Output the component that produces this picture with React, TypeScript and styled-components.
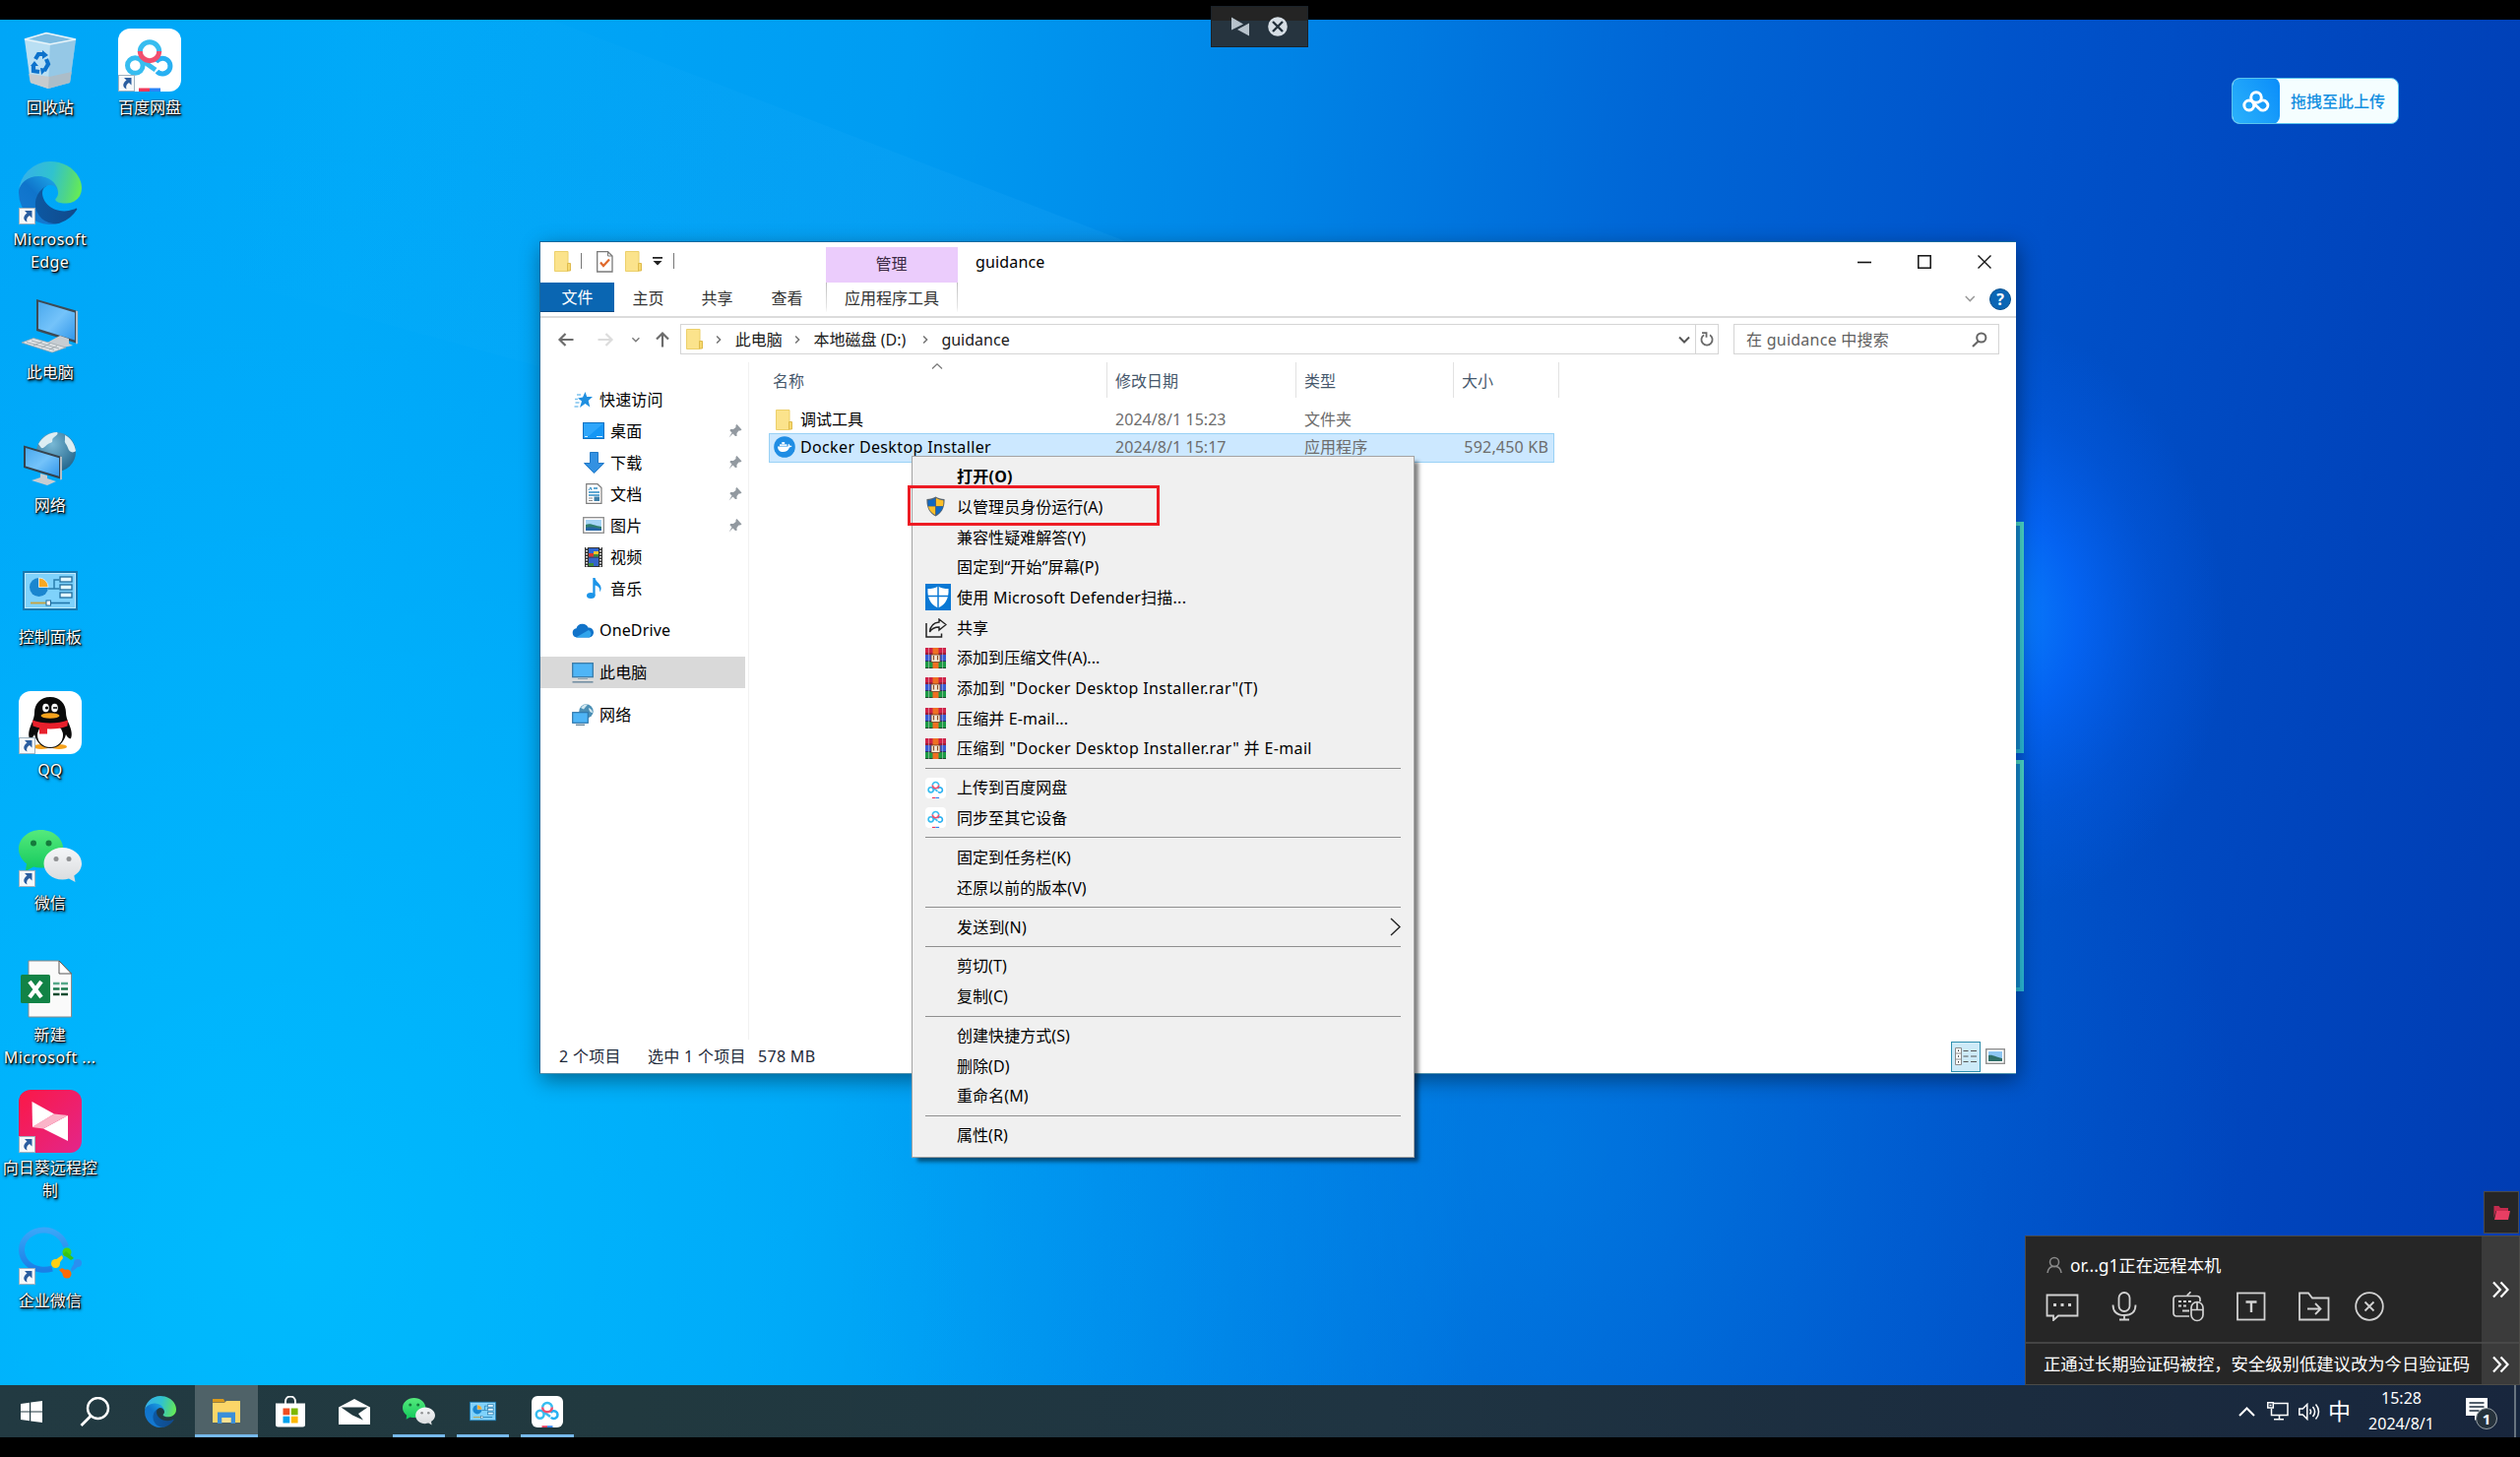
import React from "react";
import styled, { createGlobalStyle, css } from "styled-components";

const Global = createGlobalStyle`
  * { box-sizing: border-box; }
  html, body { margin: 0; padding: 0; background: #000; }
  body {
    font-family: "Noto Sans", "Noto Sans CJK SC", sans-serif;
    font-size: 16px;
    line-height: 22px;
    color: #000;
    overflow: hidden;
  }
  svg { display: block; flex: none; }
`;

/* ---------- shell ---------- */

const Screen = styled.div`
  position: relative;
  width: 2560px;
  height: 1480px;
  padding: 20px 0;
  background: #000;
  display: flex;
  flex-direction: column;
  overflow: hidden;
`;

const Desktop = styled.main`
  position: relative;
  flex: 1;
  overflow: hidden;
  background: linear-gradient(97deg, #00a6f7 0%, #00a9f8 14%, #009cf2 34%, #0084e6 48%, #0066d6 62%, #0052ca 76%, #0044bc 90%, #003cb2 100%);
`;

const Wallpaper = styled.svg`
  position: absolute;
  left: 0;
  top: 0;
`;

/* ---------- desktop icons ---------- */

const IconGrid = styled.div`
  position: absolute;
  left: 0;
  top: 9px;
  height: 1360px;
  display: grid;
  grid-auto-flow: column;
  grid-template-rows: repeat(10, 134.7px);
  grid-auto-columns: 101.3px;
`;

const IconCell = styled.div`
  display: flex;
  flex-direction: column;
  align-items: center;
  gap: 4.5px;
`;

const IconArt = styled.div`
  position: relative;
  width: 64px;
  height: 64px;
`;

const IconLabel = styled.div<{ $latin?: boolean }>`
  color: #fff;
  text-align: center;
  line-height: 23px;
  white-space: pre;
  letter-spacing: ${(p) => (p.$latin ? 0.45 : 0)}px;
  text-shadow: 1px 1px 1px #000, 1px 2px 3px rgba(0, 0, 0, 0.9), 0 0 2px rgba(0, 0, 0, 0.7);
`;

const ShortcutMark = styled.svg`
  position: absolute;
  left: 0;
  bottom: 0;
`;

/* ---------- explorer window ---------- */

const Explorer = styled.section`
  position: absolute;
  left: 548px;
  top: 225px;
  width: 1500px;
  height: 846px;
  display: flex;
  flex-direction: column;
  background: #fff;
  border: 1px solid #16699e;
  border-bottom-color: #4b90ad;
  border-right: 0;
  box-shadow: 2px 6px 20px rgba(0, 0, 0, 0.42);
`;

const TitleBar = styled.header`
  display: flex;
  height: 41px;
  padding-left: 14px;
`;

const QuickTools = styled.div`
  display: flex;
  align-items: center;
  width: 276px;
  padding-bottom: 2px;
`;

const ToolSep = styled.span<{ $ml: number; $mr: number }>`
  width: 1px;
  height: 16px;
  margin: 0 ${(p) => p.$mr}px 2px ${(p) => p.$ml}px;
  background: #777;
`;

const ToolSlot = styled.span<{ $ml?: number }>`
  margin-left: ${(p) => p.$ml ?? 0}px;
`;

const ManageTab = styled.div`
  width: 134px;
  margin-top: 5px;
  padding: 6px 1px 0 0;
  background: #ebccfc;
  text-align: center;
  color: #3b2a44;
`;

const WindowTitle = styled.div`
  flex: 1;
  padding: 9px 0 0 18px;
  letter-spacing: 0.15px;
`;

const WindowButtons = styled.div`
  display: flex;
  align-items: center;
  gap: 47px;
  padding: 0 25px 2px 0;
`;

const Ribbon = styled.nav`
  display: flex;
  height: 36px;
  border-bottom: 2px solid #dcdcdc;
`;

const RibbonTab = styled.div<{ $w: number; $kind?: "file" | "tool" }>`
  width: ${(p) => p.$w}px;
  height: 30px;
  padding-top: 5px;
  text-align: center;
  color: #333;
  ${(p) =>
    p.$kind === "file" &&
    css`
      background: #0a66b2;
      border-bottom: 1px solid #044a86;
      color: #fff;
      padding-top: 4px;
    `}
  ${(p) =>
    p.$kind === "tool" &&
    css`
      border: solid;
      border-width: 0 1px;
      border-image: linear-gradient(#bdbdbd, #e4e4e4 80%, #fff) 1;
    `}
`;

const RibbonEnd = styled.div`
  flex: 1;
  display: flex;
  justify-content: flex-end;
  align-items: center;
  gap: 13px;
  padding: 0 5px 1px 0;
`;

const HelpDot = styled.span`
  width: 22px;
  height: 22px;
  border-radius: 50%;
  background: #0b66b5;
  border: 1px solid #08518f;
  color: #fff;
  font-weight: 700;
  font-size: 16px;
  line-height: 20px;
  text-align: center;
`;

const AddressRow = styled.div`
  display: flex;
  align-items: center;
  height: 45px;
  padding: 0 17px 2px 17px;
`;

const NavButtons = styled.div`
  display: flex;
  align-items: center;
  width: 125px;
`;

const AddressBox = styled.div`
  display: flex;
  align-items: center;
  width: 1055px;
  height: 31px;
  border: 1px solid #d5d5d5;
  padding-left: 5px;
  color: #1a1a1a;
`;

const Crumb = styled.span<{ $w: number }>`
  width: ${(p) => p.$w}px;
  margin-left: 12px;
  white-space: nowrap;
`;

const AddressEnd = styled.div`
  display: flex;
  align-items: center;
  margin-left: auto;
  height: 100%;
`;

const RefreshCell = styled.div`
  display: flex;
  align-items: center;
  justify-content: center;
  width: 23px;
  height: 100%;
  margin-left: 4px;
  border-left: 1px solid #d5d5d5;
`;

const SearchBox = styled.div`
  display: flex;
  align-items: center;
  justify-content: space-between;
  width: 270px;
  height: 31px;
  margin-left: 15px;
  padding: 0 11px 0 12px;
  border: 1px solid #d5d5d5;
  color: #5f5f5f;
  letter-spacing: 0.25px;
`;

const Body = styled.div`
  flex: 1;
  display: flex;
`;

const SideTree = styled.aside`
  width: 212px;
  padding: 21.5px 3px 0 0;
  border-right: 1px solid #f1f1f1;
`;

const TreeItem = styled.div<{ $depth?: number; $gap?: boolean; $active?: boolean }>`
  display: flex;
  align-items: center;
  height: 32px;
  margin-top: ${(p) => (p.$gap ? 10.8 : 0)}px;
  padding: 0 3px 0 ${(p) => (p.$depth ? 43 : 32)}px;
  background: ${(p) => (p.$active ? "#d9d9d9" : "transparent")};
  letter-spacing: 0.15px;
`;

const TreeIcon = styled.span`
  display: flex;
  justify-content: center;
  width: 22px;
  margin-right: 6px;
`;

const PinSlot = styled.span`
  margin-left: auto;
`;

const FileList = styled.div`
  flex: 1;
  padding-left: 20px;
`;

const ColumnHeads = styled.div`
  display: flex;
  height: 36px;
  margin-bottom: 8px;
  color: #46586c;
`;

const ColumnHead = styled.div<{ $w: number; $pad: number }>`
  position: relative;
  width: ${(p) => p.$w}px;
  padding: 8px 0 0 ${(p) => p.$pad}px;
  border-right: 1px solid #e2e2e2;
`;

const SortMark = styled.svg`
  position: absolute;
  left: 165px;
  top: 1px;
`;

const FileRow = styled.div<{ $selected?: boolean }>`
  display: flex;
  align-items: center;
  width: 798px;
  height: ${(p) => (p.$selected ? 30 : 28)}px;
  border: 1px solid ${(p) => (p.$selected ? "#99d1f5" : "transparent")};
  padding-bottom: ${(p) => (p.$selected ? 2 : 0)}px;
  background: ${(p) => (p.$selected ? "#cce8ff" : "transparent")};
  color: #6d6d6d;
`;

const FileName = styled.div`
  display: flex;
  align-items: center;
  width: 351px;
  padding-left: 3px;
  gap: 5px;
  color: #000;
`;

const Tracked = styled.span<{ $by: number }>`
  letter-spacing: ${(p) => p.$by}px;
`;

const FileIcon = styled.span`
  display: flex;
  justify-content: center;
  width: 23px;
`;

const FileCell = styled.div<{ $w: number; $right?: boolean }>`
  width: ${(p) => p.$w}px;
  text-align: ${(p) => (p.$right ? "right" : "left")};
  letter-spacing: ${(p) => (p.$right ? 0.2 : 0.05)}px;
`;

const StatusBar = styled.footer`
  display: flex;
  align-items: center;
  height: 34px;
  padding: 0 11px 0 19px;
  color: #1e2a3a;
`;

const StatusText = styled.span<{ $w: number }>`
  width: ${(p) => p.$w}px;
  white-space: nowrap;
  letter-spacing: 0.3px;
`;

const ViewModes = styled.div`
  display: flex;
  align-items: center;
  gap: 5px;
  margin-left: auto;
`;

const DetailsMode = styled.div`
  display: flex;
  align-items: center;
  justify-content: center;
  width: 30px;
  height: 31px;
  background: #cdeaf8;
  border: 1px solid #2f8fae;
`;

/* ---------- context menu ---------- */

const Menu = styled.div`
  position: absolute;
  left: 926px;
  top: 443px;
  width: 511px;
  height: 713px;
  padding: 5px 0 0;
  background: #f0f0f0;
  border: 1px solid #a3a3a3;
  box-shadow: 5px 5px 4px -1px rgba(0, 0, 0, 0.5);
`;

const MenuItem = styled.div<{ $bold?: boolean; $track?: number }>`
  display: flex;
  align-items: center;
  height: 30.67px;
  padding-right: 13px;
  font-weight: ${(p) => (p.$bold ? 700 : 400)};
  letter-spacing: ${(p) => p.$track ?? 0.05}px;
  white-space: nowrap;
`;

const MenuIcon = styled.span`
  width: 32px;
  margin-left: 13px;
`;

const MenuArrow = styled.span`
  margin-left: auto;
`;

const MenuRule = styled.div`
  height: 1px;
  margin: 4.15px 13px 4.2px;
  background: #8f8f8f;
`;

const Highlight = styled.div`
  position: absolute;
  left: 922px;
  top: 473px;
  width: 256px;
  height: 41px;
  border: 3px solid #ed1c24;
`;

/* ---------- floating widgets ---------- */

const SessionTab = styled.div`
  position: absolute;
  left: 1230px;
  top: 6px;
  width: 99px;
  height: 42px;
  display: flex;
  align-items: center;
  gap: 18px;
  padding-left: 19px;
  background: linear-gradient(#242424 0 14px, #26343f 14px);
  border: 1px solid #1b232a;
`;

const UploadPill = styled.div`
  position: absolute;
  left: 2267px;
  top: 59px;
  width: 170px;
  height: 47px;
  display: flex;
  align-items: center;
  border-radius: 8px;
  background: #f5feff;
  border: 1px solid #5ac4ec;
  color: #148fe0;
  font-weight: 500;
  overflow: hidden;
`;

const UploadIcon = styled.div`
  display: flex;
  align-items: center;
  justify-content: center;
  width: 48px;
  height: 47px;
  margin-right: 11px;
  border-radius: 8px;
  background: linear-gradient(60deg, #2bb2fb, #0a8dfa);
`;

const FolderTab = styled.div`
  position: absolute;
  left: 2523px;
  top: 1190px;
  width: 36px;
  height: 43px;
  display: flex;
  align-items: center;
  justify-content: center;
  background: #262626;
  border: 1px solid #4a4a4a;
`;

const RemotePanel = styled.div`
  position: absolute;
  left: 2057px;
  top: 1235px;
  width: 503px;
  height: 152px;
  display: grid;
  grid-template-columns: 463px 38px;
  grid-template-rows: 107px 43px;
  background: #262626;
  border: 1px solid #4b4b48;
  color: #fff;
  font-size: 17.33px;
`;

const PanelMain = styled.div`
  padding: 17px 0 0 20px;
`;

const PanelTitle = styled.div`
  display: flex;
  align-items: center;
  gap: 7px;
  height: 24px;
`;

const PanelTools = styled.div`
  display: flex;
  align-items: center;
  height: 34px;
  margin-top: 13px;
`;

const PanelTool = styled.span<{ $w: number }>`
  width: ${(p) => p.$w}px;
`;

const PanelNote = styled.div`
  padding: 9px 0 0 18px;
  border-top: 2px solid #444;
  white-space: nowrap;
`;

const PanelSide = styled.div<{ $line?: boolean }>`
  display: flex;
  align-items: center;
  justify-content: center;
  background: #3b3b3b;
  border-top: ${(p) => (p.$line ? "2px solid #484848" : "0")};
`;

/* ---------- taskbar ---------- */

const Taskbar = styled.div`
  height: 53px;
  display: flex;
  background: linear-gradient(90deg, #223a42 0%, #21393f 25%, #1f3442 55%, #1b2c3f 80%, #18263d 100%);
  color: #fff;
`;

const TaskCell = styled.div<{ $w: number; $active?: boolean; $running?: boolean }>`
  position: relative;
  display: flex;
  align-items: center;
  justify-content: center;
  width: ${(p) => p.$w}px;
  background: ${(p) => (p.$active ? "#4f6268" : "transparent")};
  ${(p) =>
    (p.$running || p.$active) &&
    css`
      &::after {
        content: "";
        position: absolute;
        bottom: 0;
        left: ${p.$active ? 0 : 6}px;
        right: ${p.$active ? 0 : 6}px;
        height: 3px;
        background: #76b9ed;
      }
    `}
`;

const Tray = styled.div`
  display: flex;
  align-items: center;
  margin-left: auto;
`;

const TraySlot = styled.span<{ $mr: number }>`
  margin-right: ${(p) => p.$mr}px;
`;

const Ime = styled.span`
  width: 24px;
  font-size: 23px;
  margin: 0 16px 2px -1px;
`;

const Clock = styled.div`
  width: 69px;
  text-align: center;
  line-height: 26px;
  margin: 0 31px 1px 0;
  white-space: nowrap;
`;

const Notices = styled.div`
  position: relative;
  width: 34px;
  height: 34px;
  margin: 6px 15px 0 0;
`;

const NoticeCount = styled.span`
  position: absolute;
  left: 10px;
  top: 10px;
  width: 22px;
  height: 22px;
  border-radius: 50%;
  border: 1px solid #9aa3a8;
  background: #26323c;
  font-size: 15px;
  font-weight: 700;
  line-height: 20px;
  text-align: center;
`;

const ShowDesktop = styled.div`
  width: 6px;
  height: 53px;
  border-left: 2px solid #67737e;
`;

/* ---------- drawings ---------- */

type Size = { s?: number };

const Baidu = ({ s = 64 }: Size) => (
  <svg width={s} height={s} viewBox="0 0 64 64">
    <rect width="64" height="64" rx="12" fill="#fff" />
    <g fill="none" strokeWidth="5">
      <circle cx="17.3" cy="37.500" r="7.800" stroke="#37bdf0" />
      <path d="M39.500 43.500a7.800 7.800 0 1 0-1-9.500" stroke="#28b0f2" />
      <path d="M23 31.500 38 42" stroke="#37bdf0" />
      <path d="M22.300 23.500a9.700 9.700 0 1 1 19.400 0" stroke="#37bdf0" />
      <path d="M22.300 23a9.700 9.700 0 0 0 19.400 0" stroke="#f04f6f" />
    </g>
    <rect x="21" y="60.5" width="11" height="3.5" fill="#f2385a" />
    <rect x="32" y="60.5" width="11" height="3.5" fill="#2b83f6" />
  </svg>
);

const Edge = ({ s = 64 }: Size) => (
  <svg width={s} height={s} viewBox="0 0 256 256">
    <defs>
      <linearGradient id="edgeA" x1="63" y1="177" x2="241" y2="177" gradientUnits="userSpaceOnUse">
        <stop offset="0" stopColor="#0c59a4" />
        <stop offset="1" stopColor="#114a8b" />
      </linearGradient>
      <linearGradient id="edgeB" x1="157" y1="100" x2="46" y2="221" gradientUnits="userSpaceOnUse">
        <stop offset="0" stopColor="#1b9de2" />
        <stop offset="0.5" stopColor="#0f74cb" />
        <stop offset="1" stopColor="#1478d0" />
      </linearGradient>
      <linearGradient id="edgeC" x1="10" y1="60" x2="255" y2="120" gradientUnits="userSpaceOnUse">
        <stop offset="0" stopColor="#35b0ea" />
        <stop offset="0.5" stopColor="#30c2cf" />
        <stop offset="0.8" stopColor="#4fd686" />
        <stop offset="1" stopColor="#66eb56" />
      </linearGradient>
    </defs>
    <g transform="translate(-4.63 -4.92)">
      <path fill="url(#edgeA)" d="M235.68 195.46a93.73 93.73 0 0 1-10.54 4.71 101.87 101.87 0 0 1-35.9 6.46c-47.32 0-88.54-32.55-88.54-74.32A31.48 31.48 0 0 1 117.13 105.1c-42.8 1.8-53.8 46.4-53.8 72.53 0 73.88 68.09 81.37 82.76 81.37 7.91 0 19.84-2.3 27-4.56l1.31-.44a128.34 128.34 0 0 0 66.6-52.8 4 4 0 0 0-5.32-5.74z" />
      <path fill="url(#edgeB)" d="M110.34 246.34A79.2 79.2 0 0 1 87.6 225a80.72 80.72 0 0 1 29.53-120c3.12-1.47 8.45-4.13 15.54-4a32.35 32.35 0 0 1 25.69 13 31.88 31.88 0 0 1 6.36 18.66c0-.21 24.46-79.6-80-79.6-43.9 0-80 41.66-80 78.21a130.15 130.15 0 0 0 12.11 56 128 128 0 0 0 156.38 67.11 75.55 75.55 0 0 1-62.78-8z" />
      <path fill="url(#edgeC)" d="M156.94 153.78c-.81 1.05-3.3 2.5-3.3 5.66 0 2.61 1.7 5.12 4.72 7.23 14.38 10 41.49 8.68 41.56 8.68A59.56 59.56 0 0 0 230.19 167a61.38 61.38 0 0 0 30.43-52.88c.26-22.41-8-37.31-11.34-43.91C228.09 28.76 182.35 5 132.61 5a128 128 0 0 0-128 126.2c.48-36.54 36.8-66.05 80-66.05 3.5 0 23.46.34 42 10.07 16.34 8.58 24.9 18.94 30.85 29.21 6.18 10.67 7.28 24.15 7.28 29.52s-2.74 13.33-7.8 19.83z" />
    </g>
  </svg>
);

const WeChat = ({ s = 64 }: Size) => (
  <svg width={s} height={s} viewBox="0 0 64 64">
    <defs>
      <linearGradient id="wcG" x1="0" y1="0" x2="0" y2="1">
        <stop offset="0" stopColor="#55ea7c" />
        <stop offset="1" stopColor="#12c85c" />
      </linearGradient>
      <linearGradient id="wcW" x1="0" y1="0" x2="0" y2="1">
        <stop offset="0" stopColor="#f4f6f8" />
        <stop offset="1" stopColor="#d9dbdd" />
      </linearGradient>
    </defs>
    <path fill="url(#wcG)" d="M22.6 6C10 6 0 14.6 0 25.4c0 6 3.200 11.200 8 14.800L7 48l8-4.600c2.400.7 5 1.100 7.600 1.100 12.600 0 22.700-8.500 22.700-19.100S35.200 6 22.600 6z" />
    <ellipse cx="15" cy="19.500" rx="3" ry="3" fill="#157a3c" />
    <ellipse cx="30.500" cy="19.500" rx="3" ry="3" fill="#157a3c" />
    <path fill="url(#wcW)" d="M44.500 24C34 24 25.500 31.200 25.500 40.200S34 56.500 44.500 56.500c2.300 0 4.500-.4 6.500-1l6.500 3.500-1.200-6.500C61 49.500 64 45.200 64 40.200 64 31.200 55 24 44.500 24z" />
    <ellipse cx="38" cy="35.500" rx="2.500" ry="2.500" fill="#8f9193" />
    <ellipse cx="51" cy="35.500" rx="2.500" ry="2.500" fill="#8f9193" />
  </svg>
);

const ControlPanel = ({ s = 64 }: Size) => (
  <svg width={s} height={s} viewBox="0 0 64 64">
    <rect x="4" y="12" width="56" height="40" fill="#1879b0" />
    <rect x="6.500" y="14.500" width="51" height="35" fill="#7fd2fb" stroke="#bfe9ff" strokeWidth="1" />
    <circle cx="20.500" cy="28.500" r="9.500" fill="#1a86cf" />
    <path d="M20.500 28.500V19a9.500 9.500 0 0 1 9.500 9.500z" fill="#f7a823" stroke="#e8f7ff" strokeWidth="0.800" />
    <path d="M30 30h6v-9h5M36 30h5" fill="none" stroke="#2a7dad" strokeWidth="1.500" />
    <g fill="#e3f6ff" stroke="#1f6d9d" strokeWidth="1.300">
      <rect x="42" y="18" width="12" height="5" />
      <rect x="42" y="26" width="12" height="5" />
      <rect x="42" y="34" width="12" height="5" />
    </g>
    <path d="M12 44.500h16" stroke="#c9a23d" strokeWidth="1.800" />
    <path d="M32 44.500h20" stroke="#2278ac" strokeWidth="1.600" />
    <rect x="28" y="42" width="4.500" height="5" fill="#fff" stroke="#1f6d9d" />
  </svg>
);

const RecycleBin = () => (
  <svg width="64" height="64" viewBox="0 0 64 64">
    <path d="M6 11 28 4l30 7-6 44-22 6-18-6z" fill="#bfe0f2" fillOpacity="0.75" />
    <path d="M6 11 32 16 30 61 12 55z" fill="#d5e8f3" fillOpacity="0.6" />
    <path d="M32 16 58 11 52 55 30 61z" fill="#96c6e2" fillOpacity="0.8" />
    <path d="M10 46 32 49 30 61 12 55z" fill="#c9c6c4" fillOpacity="0.8" />
    <path d="M31 49 54 44 52 55 30 61z" fill="#b7b8ba" fillOpacity="0.7" />
    <path d="M10 10 28 5.500 54 11 32 15z" fill="#7ebbe0" />
    <path d="M6 11 28 4.500 58 11 32 16z" fill="none" stroke="#e9f3f8" strokeWidth="1.500" />
    <g fill="none" stroke="#0c72cc" strokeWidth="4.200">
      <path d="M17 31l3-5h6" />
      <path d="M28 31l2 5-4 7" />
      <path d="M21 44l-6-1v-6" />
    </g>
    <path d="M24 22l6 5-6 4zM29 41l-6 6-1-7zM12 38l4-5 4 5z" fill="#0c72cc" />
  </svg>
);

const ThisPc = () => (
  <svg width="64" height="64" viewBox="0 0 64 64">
    <defs>
      <linearGradient id="scr" x1="0" y1="0" x2="1" y2="1">
        <stop offset="0" stopColor="#4aa9ee" />
        <stop offset="0.5" stopColor="#74c3fa" />
        <stop offset="1" stopColor="#3297ea" />
      </linearGradient>
    </defs>
    <path d="M18 6 60 18v33L18 38z" fill="#3d4a54" />
    <path d="M20 8.500 57 19.500v28L20 36z" fill="url(#scr)" />
    <path d="M60 18v33l-2 .5V17.500z" fill="#b6bec4" />
    <path d="M38 45l4-2 9 3v5l4 2-10 2-16-5z" fill="#c7cdd2" />
    <path d="M3 50l12-4.500L48 55l-14 5z" fill="#dfe3e6" stroke="#9da6ac" strokeWidth="0.800" />
    <path d="M8 49.500l28 8M13 48l28 8M15 53l9-4M23 55l9-4M31 57l8-3.500" stroke="#9da6ac" strokeWidth="0.900" />
  </svg>
);

const NetworkArt = () => (
  <svg width="64" height="64" viewBox="0 0 64 64">
    <defs>
      <radialGradient id="globe" cx="0.4" cy="0.3" r="0.8">
        <stop offset="0" stopColor="#79b9d6" />
        <stop offset="1" stopColor="#1d5f86" />
      </radialGradient>
    </defs>
    <circle cx="38" cy="26" r="20" fill="url(#globe)" />
    <path d="M20 18c4-7 11-12 19-12 2 2-2 4-4 6s1 4-3 5-6 6-9 5zM47 9c6 3 10 9 11 16-3 3-7 1-8-3s-4-5-3-8z" fill="#dcedf3" />
    <path d="M5 19.500 44 31v23L5 42z" fill="#35434e" />
    <path d="M7 22l34 10.300v18.500L7 40.500z" fill="url(#scr)" />
    <path d="M44 31v23l-2 .5V30.500z" fill="#b6bec4" />
    <path d="M22 48l7 2v3l9 3-9 4-16-5 9-3z" fill="#c7cdd2" />
  </svg>
);

const QQ = () => (
  <svg width="64" height="64" viewBox="0 0 64 64">
    <rect width="64" height="64" rx="12" fill="#fff" />
    <ellipse cx="23" cy="56.500" rx="8" ry="2.500" fill="#f6a21c" />
    <ellipse cx="41" cy="56.500" rx="8" ry="2.500" fill="#f6a21c" />
    <path d="M32 6c-10 0-16 7-16 16 0 3-1 6-2 9-3 6-5 13-3 17 2 1 4-2 5-4 2 8 8 14 16 14s14-6 16-14c1 2 3 5 5 4 2-4 0-11-3-17-1-3-2-6-2-9 0-9-6-16-16-16z" fill="#0a0a0a" />
    <ellipse cx="32" cy="45" rx="13" ry="12" fill="#fff" />
    <path d="M14 29.500c10 4 26 4 36 0l-.5 6c-9 4-25.500 4-35 0z" fill="#e8202c" />
    <path d="M21 35h8v8.500h-8z" fill="#e8202c" />
    <ellipse cx="27.500" cy="17" rx="3.300" ry="4.300" fill="#fff" />
    <ellipse cx="36.500" cy="17" rx="3.300" ry="4.300" fill="#fff" />
    <circle cx="28.500" cy="17" r="1.600" fill="#000" />
    <path d="M35 17h4" stroke="#000" strokeWidth="1.500" />
    <ellipse cx="32" cy="25" rx="9.500" ry="2.800" fill="#f6a21c" />
  </svg>
);

const Excel = () => (
  <svg width="64" height="64" viewBox="0 0 64 64">
    <path d="M10 4h31l12.500 13v44H10z" fill="#fafafa" stroke="#8b8b8b" />
    <path d="M41 4v13h12.500z" fill="#fff" stroke="#555" />
    <rect x="2" y="18" width="30" height="29" rx="1.500" fill="#128346" />
    <path d="M11 25l12 16M23 25 11 41" stroke="#fff" strokeWidth="4.200" />
    <g strokeWidth="2.600">
      <path d="M35 27h6.500M43 27h7" stroke="#57a98a" />
      <path d="M35 32.500h6.500M43 32.500h7" stroke="#1c7a4c" />
      <path d="M35 38h6.500M43 38h7" stroke="#124b30" />
    </g>
  </svg>
);

const Sunflower = () => (
  <svg width="64" height="64" viewBox="0 0 64 64">
    <defs>
      <linearGradient id="sun" x1="0" y1="0" x2="1" y2="1">
        <stop offset="0" stopColor="#fb1846" />
        <stop offset="1" stopColor="#e3268b" />
      </linearGradient>
    </defs>
    <rect width="64" height="64" rx="12" fill="url(#sun)" />
    <path d="M13.500 12 36 24.500 14 38z" fill="#fff" />
    <path d="M50 52 25 39.500 50 26z" fill="#fff" />
    <path d="M13.500 38 36 24.500l14 1.500-25 13.500z" fill="#fbb4c8" />
  </svg>
);

const WeCom = () => (
  <svg width="64" height="64" viewBox="0 0 64 64">
    <defs>
      <linearGradient id="wcm" x1="0" y1="0" x2="0" y2="1">
        <stop offset="0" stopColor="#3aa5f8" />
        <stop offset="1" stopColor="#1a7fe6" />
      </linearGradient>
    </defs>
    <path d="M48 25.500C45 15 36 8.500 25.500 8.500 13 8.500 3 17.500 3 28.500S12 47 22 48.500c4 .7 8 .3 12-.8" fill="none" stroke="url(#wcm)" strokeWidth="6" />
    <circle cx="49" cy="31" r="4.500" fill="#4bd313" />
    <path d="M48 30l8 7-3 2-8-6z" fill="#35c41a" />
    <circle cx="37.500" cy="42.500" r="4.500" fill="#ffd012" />
    <path d="M37 39l7-5 1 3-5 7z" fill="#ffd012" />
    <circle cx="49" cy="53" r="4.500" fill="#fb6a07" />
    <path d="M48 56l-7-7 3-2 7 4z" fill="#fb6a07" />
    <circle cx="60" cy="42" r="4" fill="#2b8ff0" />
    <path d="M61 45l-7 6-1-3 4-7z" fill="#2b8ff0" />
  </svg>
);

const Shortcut = () => (
  <ShortcutMark width="17" height="17" viewBox="0 0 17 17">
    <rect x="0.500" y="0.500" width="16" height="16" fill="#f6f8fa" stroke="#9fb2c0" />
    <path d="M6 3h7.500v7.500l-2.500-2.500c-2.500 1.500-3.500 3.500-2.500 6.500C5 13 3.500 9 8.500 5.500z" fill="#2a5d9f" />
  </ShortcutMark>
);

const Folder = () => (
  <svg width="18" height="21" viewBox="0 0 18 21">
    <path d="M0.500 0.500H14V20.500H0.500z" fill="#fbe38c" stroke="#ecd06b" />
    <path d="M13.500 12.500h3v7.500h-3z" fill="#f6d96f" stroke="#dfbb4c" />
  </svg>
);

const CheckDoc = () => (
  <svg width="17" height="22" viewBox="0 0 17 22">
    <path d="M0.700 0.700h10.800L16 5v16H0.700z" fill="#fff" stroke="#7a7a7a" strokeWidth="1.300" />
    <path d="M11.500 0.700V5H16" fill="none" stroke="#7a7a7a" />
    <path d="M4 11.500l3 3.500 6-6.500" fill="none" stroke="#e0692b" strokeWidth="2.200" />
  </svg>
);

const Chevron = ({ d = "r", c = "#6f6f6f", w = 7, sw = 2 }: { d?: "r" | "d" | "u"; c?: string; w?: number; sw?: number }) => {
  const turn = { r: 0, d: 90, u: -90 }[d];
  return (
    <svg width={w * 1.4} height={w * 1.4} viewBox="0 0 14 14">
      <path d="M4.500 2l5 5-5 5" fill="none" stroke={c} strokeWidth={sw} transform={`rotate(${turn} 7 7)`} />
    </svg>
  );
};

const Arrow = ({ c, turn = 0 }: { c: string; turn?: number }) => (
  <svg width="18" height="18" viewBox="0 0 18 18">
    <path d="M16.500 9H2.500M8.500 3 2.500 9l6 6" fill="none" stroke={c} strokeWidth="2.200" transform={`rotate(${turn} 9 9)`} />
  </svg>
);

const Pin = () => (
  <svg width="14" height="16" viewBox="0 0 14 16">
    <path d="M8.500 1 13.500 6.500 12 7.500 10.500 7.500 8.500 10v3L7 13 4.500 10.500.500 14.500 3.500 9.500 1.500 7.500 2 6h3l2.500-2V2z" fill="#9299a0" />
  </svg>
);

const Docker = () => (
  <svg width="22" height="22" viewBox="0 0 22 22">
    <circle cx="11" cy="11" r="10.800" fill="#1f8de4" />
    <path d="M4 10.500h10.500c.3-1.200 0-2 .6-2.800.9.600 1.200 1.300 1.300 2 .9-.1 1.600 0 2.100.4-.5 1-1.300 1.400-2.500 1.400C15 14.500 12.500 16 9.500 16 6 16 4 14 4 10.500z" fill="#fff" />
    <path d="M6 8.200h7.500v1.900H6zM8.200 6h3v2h-3z" fill="#e8f4fd" />
  </svg>
);

const TreeArt: Record<string, React.ReactNode> = {
  star: (
    <svg width="21" height="18" viewBox="0 0 21 18">
      <path d="M12.500 1l1.700 5H20l-4.300 4 1.600 6.500-4.800-3.500-5.500 4 2-6.500L5 7.500l5-1z" fill="#1f8fe0" />
      <path d="M4 4h4M2 8.500h3M2.500 12h4M1.500 16h4" stroke="#7fc3ee" strokeWidth="1.300" />
    </svg>
  ),
  desktop: (
    <svg width="22" height="17" viewBox="0 0 22 17">
      <rect x="0.500" y="0.500" width="21" height="16" fill="#1597f5" stroke="#0b70c2" />
      <path d="M1 1h20L6 14H1z" fill="#3fb0ff" fillOpacity="0.6" />
      <path d="M2 14.500h3M14 14.500h6" stroke="#d8efff" strokeWidth="1.200" />
    </svg>
  ),
  download: (
    <svg width="21" height="22" viewBox="0 0 21 22">
      <path d="M6.500 0.500h8v11h6L10.500 21.500.500 11.500h6z" fill="#3391e2" stroke="#2179c7" />
    </svg>
  ),
  doc: (
    <svg width="17" height="21" viewBox="0 0 17 21">
      <path d="M0.700 0.700H12L16 4.500V20.300H0.700z" fill="#fff" stroke="#7d7d7d" strokeWidth="1.200" />
      <path d="M8 5h4M3 9h11M3 12h11" stroke="#2e8cc4" strokeWidth="1.500" />
      <path d="M3 7l2-3 1 3" stroke="#2e8cc4" fill="none" />
      <path d="M3 15h4M3 17.500h4" stroke="#8a8a8a" />
      <rect x="8.500" y="13.500" width="5.500" height="4.500" fill="#3e7fa8" />
    </svg>
  ),
  picture: (
    <svg width="22" height="17" viewBox="0 0 22 17">
      <rect x="0.700" y="0.700" width="20.600" height="15.600" fill="#fff" stroke="#8c8c8c" strokeWidth="1.300" />
      <rect x="3" y="3" width="16" height="11" fill="#a5d4f5" />
      <path d="M3 8c5-2 8 1 16 2v4H3z" fill="#2f7d6d" />
      <path d="M3 11c6-1 10 0 16 1v2H3z" fill="#2565a5" />
    </svg>
  ),
  video: (
    <svg width="18" height="20" viewBox="0 0 18 20">
      <rect width="18" height="20" fill="#333" />
      <path d="M2 0v20M16 0v20" stroke="#ddd" strokeWidth="2" strokeDasharray="1.500 1.500" />
      <rect x="4" y="1" width="10" height="8.500" fill="#2f67d5" />
      <rect x="4" y="10.500" width="10" height="8.500" fill="#3565c8" />
      <path d="M4 6h5v3.500H4z" fill="#d8382e" />
      <path d="M9 4h5v3H9z" fill="#f2c52c" />
      <path d="M9 7h5v2.500H9zM4 16h5v3H4z" fill="#3c8d3c" />
    </svg>
  ),
  music: (
    <svg width="15" height="21" viewBox="0 0 15 21">
      <ellipse cx="4.300" cy="18" rx="4.300" ry="3" fill="#1b94e8" />
      <path d="M6.300 0h2.300c.5 4.500 6 5.500 6 10.500 0 1.500-.6 3-1.400 3.800.5-3.500-1-6-4.600-6.800V18H6.300z" fill="#1b94e8" />
    </svg>
  ),
  cloud: (
    <svg width="22" height="15" viewBox="0 0 22 15">
      <path d="M5 14.500A4.700 4.700 0 0 1 4.500 5.200 6.500 6.500 0 0 1 16.500 4.500a5 5 0 0 1 1 10z" fill="#1173c9" />
      <path d="M4 14.500l13-7.500a4.500 4.500 0 0 1 .8 7.500z" fill="#2fa4ec" />
    </svg>
  ),
  pc: (
    <svg width="22" height="21" viewBox="0 0 22 21">
      <rect x="0.700" y="0.700" width="20.600" height="14" fill="#4fb5f6" stroke="#3a7ba8" strokeWidth="1.300" />
      <path d="M6 16.500h10" stroke="#8fa3b0" />
      <path d="M0.500 19.800h21" stroke="#7590a3" strokeWidth="1.600" />
    </svg>
  ),
  net: (
    <svg width="22" height="22" viewBox="0 0 22 22">
      <circle cx="14.500" cy="7.500" r="7.200" fill="#4b8fb5" />
      <path d="M9 4c2-3 5-4 7-3.500-1 2-3 3-4 5zM17 4c3 1 4 3 4 5-2 0-4-2-4-5z" fill="#cfe6ef" />
      <rect x="0.700" y="8.700" width="15.600" height="10.600" fill="#4fb5f6" stroke="#2f78ad" strokeWidth="1.200" />
      <path d="M4 21.300h9" stroke="#5d7f95" strokeWidth="1.300" />
    </svg>
  ),
};

const Rar = () => (
  <svg width="21" height="21" viewBox="0 0 21 21">
    <rect width="21" height="7" fill="#cf2348" />
    <rect y="7" width="21" height="7" fill="#3a5bd2" />
    <rect y="14" width="21" height="7" fill="#1c9a45" />
    <path d="M0 6h21M0 13.500h21M0 20.500h21" stroke="#2a1420" strokeOpacity="0.6" strokeWidth="1.200" />
    <path d="M3.500 0v21M17.500 0v21" stroke="#f0e2e6" strokeWidth="1" strokeOpacity="0.45" />
    <rect x="7.500" width="6" height="21" fill="#ee6f22" />
    <rect x="6" y="7" width="9" height="7.500" fill="#f6ead8" stroke="#6b3a1e" strokeWidth="0.800" />
    <path d="M8.500 8v4.500M12.500 8v4.500" stroke="#8a4a22" strokeWidth="1.200" />
  </svg>
);

const Uac = () => (
  <svg width="21" height="21" viewBox="0 0 21 21">
    <path d="M10.500.500C13 2 16 3 19.500 3c.5 8-2.500 14-9 17.500C4 17 1 11 1.500 3 5 3 8 2 10.500.500z" fill="#58646e" />
    <path d="M10 2v8H3C2.600 8 2.500 6 2.700 4.200 5.500 4 8 3.300 10 2zM11 10.500h7c-.8 3.500-3 6.500-7 8.500z" fill="#1268c0" />
    <path d="M11 2c2 1.300 4.500 2 7.300 2.200.2 1.800.1 3.800-.3 5.800h-7zM10 19c-4-2-6.200-5-7-8.500h7z" fill="#fcbf28" />
  </svg>
);

const Defender = () => (
  <svg width="26" height="27" viewBox="0 0 26 27">
    <rect width="26" height="27" fill="#0a78d4" />
    <path d="M13 2.500c3 2 6.500 2.500 10.500 2.500.6 9-2.500 16-10.500 19.500C5 21 1.900 14 2.500 5 6.500 5 10 4.500 13 2.500z" fill="#fff" />
    <path d="M13 2v23M2 12.500h22" stroke="#0a78d4" strokeWidth="1.500" />
  </svg>
);

const ShareArt = () => (
  <svg width="22" height="20" viewBox="0 0 22 20">
    <path d="M1 5v14h15.500v-3.500" fill="none" stroke="#222" strokeWidth="1.500" />
    <path d="M14 1l7 5.500-7 5.500V9C9.500 9 6.500 10.500 4.500 14 5 8.500 8.500 4.500 14 4z" fill="none" stroke="#222" strokeWidth="1.400" />
  </svg>
);

/* ---------- data ---------- */

const desktopIcons: { art: React.ReactNode; label: string; link?: boolean; latin?: boolean }[] = [
  { art: <RecycleBin />, label: "回收站" },
  { art: <Edge />, label: "Microsoft\nEdge", link: true, latin: true },
  { art: <ThisPc />, label: "此电脑" },
  { art: <NetworkArt />, label: "网络" },
  { art: <ControlPanel />, label: "控制面板" },
  { art: <QQ />, label: "QQ", link: true },
  { art: <WeChat />, label: "微信", link: true },
  { art: <Excel />, label: "新建\nMicrosoft ...", latin: true },
  { art: <Sunflower />, label: "向日葵远程控\n制", link: true },
  { art: <WeCom />, label: "企业微信", link: true },
  { art: <Baidu />, label: "百度网盘", link: true },
];

const tree = [
  { icon: "star", label: "快速访问" },
  { icon: "desktop", label: "桌面", depth: 1, pin: true },
  { icon: "download", label: "下载", depth: 1, pin: true },
  { icon: "doc", label: "文档", depth: 1, pin: true },
  { icon: "picture", label: "图片", depth: 1, pin: true },
  { icon: "video", label: "视频", depth: 1 },
  { icon: "music", label: "音乐", depth: 1 },
  { icon: "cloud", label: "OneDrive", gap: true },
  { icon: "pc", label: "此电脑", gap: true, active: true },
  { icon: "net", label: "网络", gap: true },
];

type Entry = { label: string; icon?: React.ReactNode; bold?: boolean; more?: boolean; track?: number } | null;

const menu: Entry[] = [
  { label: "打开(O)", bold: true, track: 0.25 },
  { label: "以管理员身份运行(A)", icon: <Uac /> },
  { label: "兼容性疑难解答(Y)" },
  { label: "固定到“开始”屏幕(P)", track: 0.15 },
  { label: "使用 Microsoft Defender扫描...", icon: <Defender />, track: 0.25 },
  { label: "共享", icon: <ShareArt /> },
  { label: "添加到压缩文件(A)...", icon: <Rar /> },
  { label: '添加到 "Docker Desktop Installer.rar"(T)', icon: <Rar />, track: 0.34 },
  { label: "压缩并 E-mail...", icon: <Rar />, track: 0.15 },
  { label: '压缩到 "Docker Desktop Installer.rar" 并 E-mail', icon: <Rar />, track: 0.36 },
  null,
  { label: "上传到百度网盘", icon: <Baidu s={21} /> },
  { label: "同步至其它设备", icon: <Baidu s={21} /> },
  null,
  { label: "固定到任务栏(K)" },
  { label: "还原以前的版本(V)" },
  null,
  { label: "发送到(N)", more: true, track: 0.2 },
  null,
  { label: "剪切(T)" },
  { label: "复制(C)" },
  null,
  { label: "创建快捷方式(S)" },
  { label: "删除(D)" },
  { label: "重命名(M)", track: 0.1 },
  null,
  { label: "属性(R)" },
];

/* ---------- sections ---------- */

const WallpaperArt = () => (
  <Wallpaper width="2560" height="1387" viewBox="0 0 2560 1387">
    <defs>
      <radialGradient id="glowR" cx="0" cy="0" r="1" gradientUnits="userSpaceOnUse" gradientTransform="translate(2030 600) rotate(-8) scale(230 300)">
        <stop offset="0" stopColor="#0a84ff" />
        <stop offset="0.35" stopColor="#0568fc" stopOpacity="0.8" />
        <stop offset="0.7" stopColor="#0560f0" stopOpacity="0.3" />
        <stop offset="1" stopColor="#0560f0" stopOpacity="0" />
      </radialGradient>
      <radialGradient id="glowB" cx="300" cy="1250" r="1200" gradientUnits="userSpaceOnUse">
        <stop offset="0" stopColor="#00bfff" stopOpacity="0.8" />
        <stop offset="0.5" stopColor="#00b8ff" stopOpacity="0.45" />
        <stop offset="1" stopColor="#00a8ff" stopOpacity="0" />
      </radialGradient>
      <radialGradient id="glowM" cx="1560" cy="1150" r="720" gradientUnits="userSpaceOnUse">
        <stop offset="0" stopColor="#0094f0" stopOpacity="0.4" />
        <stop offset="1" stopColor="#0080e8" stopOpacity="0" />
      </radialGradient>
      <linearGradient id="beam" x1="300" y1="0" x2="1900" y2="600" gradientUnits="userSpaceOnUse">
        <stop offset="0" stopColor="#3ac0ff" stopOpacity="0" />
        <stop offset="1" stopColor="#3ab0ff" stopOpacity="0.26" />
      </linearGradient>
      <linearGradient id="pane" x1="0" y1="0" x2="0" y2="1">
        <stop offset="0" stopColor="#4fe0d0" />
        <stop offset="1" stopColor="#2cc0e0" />
      </linearGradient>
    </defs>
    <rect width="2560" height="1387" fill="url(#glowB)" />
    <rect width="2560" height="1387" fill="url(#glowM)" />
    <path d="M560 0 1960 540 1960 745 0 200V0z" fill="url(#beam)" />
    <rect x="1600" y="200" width="800" height="860" fill="url(#glowR)" />
    <rect x="1860" y="512" width="194" height="231" fill="#1590d8" stroke="url(#pane)" strokeWidth="4" />
    <rect x="1860" y="754" width="194" height="231" fill="#1590d8" stroke="url(#pane)" strokeWidth="4" />
  </Wallpaper>
);

const ExplorerWindow = () => (
  <Explorer>
    <TitleBar>
      <QuickTools>
        <Folder />
        <ToolSep $ml={9} $mr={15} />
        <CheckDoc />
        <ToolSlot $ml={12}>
          <Folder />
        </ToolSlot>
        <ToolSlot $ml={10}>
          <svg width="10" height="9" viewBox="0 0 10 9">
            <path d="M0 0h10v1.800H0zM0.500 4h9L5 8.500z" fill="#222" />
          </svg>
        </ToolSlot>
        <ToolSep $ml={11} $mr={0} />
      </QuickTools>
      <ManageTab>管理</ManageTab>
      <WindowTitle>guidance</WindowTitle>
      <WindowButtons>
        <svg width="14" height="14" viewBox="0 0 14 14">
          <path d="M0 7.500h14" stroke="#111" strokeWidth="1.600" />
        </svg>
        <svg width="14" height="14" viewBox="0 0 14 14">
          <rect x="0.800" y="0.800" width="12.400" height="12.400" fill="none" stroke="#111" strokeWidth="1.500" />
        </svg>
        <svg width="14" height="14" viewBox="0 0 14 14">
          <path d="M0.500.500l13 13M13.500.500l-13 13" stroke="#111" strokeWidth="1.400" />
        </svg>
      </WindowButtons>
    </TitleBar>
    <Ribbon>
      <RibbonTab $w={75} $kind="file">
        文件
      </RibbonTab>
      <RibbonTab $w={69}>主页</RibbonTab>
      <RibbonTab $w={71}>共享</RibbonTab>
      <RibbonTab $w={71}>查看</RibbonTab>
      <ToolSlot $ml={4} />
      <RibbonTab $w={134} $kind="tool">
        应用程序工具
      </RibbonTab>
      <RibbonEnd>
        <Chevron d="d" c="#9a9a9a" w={9} sw={1.7} />
        <HelpDot>?</HelpDot>
      </RibbonEnd>
    </Ribbon>
    <AddressRow>
      <NavButtons>
        <Arrow c="#6c6c6c" />
        <ToolSlot $ml={22}>
          <Arrow c="#dcdcdc" turn={180} />
        </ToolSlot>
        <ToolSlot $ml={17}>
          <Chevron d="d" c="#7a7a7a" w={7} />
        </ToolSlot>
        <ToolSlot $ml={13}>
          <Arrow c="#6c6c6c" turn={90} />
        </ToolSlot>
      </NavButtons>
      <AddressBox>
        <Folder />
        <ToolSlot $ml={10}>
          <Chevron />
        </ToolSlot>
        <Crumb $w={58}>此电脑</Crumb>
        <Chevron />
        <Crumb $w={108}>本地磁盘 (D:)</Crumb>
        <Chevron />
        <Crumb $w={80}>guidance</Crumb>
        <AddressEnd>
          <Chevron d="d" c="#555" w={10} sw={2} />
          <RefreshCell>
            <svg width="14" height="16" viewBox="0 0 14 16">
              <path d="M4 3.300A5.600 5.600 0 1 0 10 3.300" fill="none" stroke="#6a6a6a" strokeWidth="1.800" />
              <path d="M2 1.200h4.500v4.500" fill="none" stroke="#6a6a6a" strokeWidth="1.800" />
            </svg>
          </RefreshCell>
        </AddressEnd>
      </AddressBox>
      <SearchBox>
        <span>在 guidance 中搜索</span>
        <svg width="16" height="16" viewBox="0 0 16 16">
          <circle cx="9.800" cy="6" r="4.600" fill="none" stroke="#666" strokeWidth="2" />
          <path d="M6.800 9.500 1 15" stroke="#666" strokeWidth="2.200" />
        </svg>
      </SearchBox>
    </AddressRow>
    <Body>
      <SideTree>
        {tree.map((t) => (
          <TreeItem key={t.label} $depth={t.depth} $gap={t.gap} $active={t.active}>
            <TreeIcon>{TreeArt[t.icon]}</TreeIcon>
            {t.label}
            {t.pin && (
              <PinSlot>
                <Pin />
              </PinSlot>
            )}
          </TreeItem>
        ))}
      </SideTree>
      <FileList>
        <ColumnHeads>
          <ColumnHead $w={344} $pad={4}>
            名称
            <SortMark width="12" height="6" viewBox="0 0 12 6">
              <path d="M1 5.500 6 .800l5 4.700" fill="none" stroke="#777" strokeWidth="1.200" />
            </SortMark>
          </ColumnHead>
          <ColumnHead $w={192} $pad={8}>
            修改日期
          </ColumnHead>
          <ColumnHead $w={160} $pad={8}>
            类型
          </ColumnHead>
          <ColumnHead $w={107} $pad={8}>
            大小
          </ColumnHead>
        </ColumnHeads>
        <FileRow>
          <FileName>
            <FileIcon>
              <Folder />
            </FileIcon>
            调试工具
          </FileName>
          <FileCell $w={192}>2024/8/1 15:23</FileCell>
          <FileCell $w={150}>文件夹</FileCell>
        </FileRow>
        <FileRow $selected>
          <FileName>
            <FileIcon>
              <Docker />
            </FileIcon>
            <Tracked $by={0.36}>Docker Desktop Installer</Tracked>
          </FileName>
          <FileCell $w={192}>2024/8/1 15:17</FileCell>
          <FileCell $w={150}>应用程序</FileCell>
          <FileCell $w={98} $right>
            592,450 KB
          </FileCell>
        </FileRow>
      </FileList>
    </Body>
    <StatusBar>
      <StatusText $w={90}>2 个项目</StatusText>
      <StatusText $w={112}>选中 1 个项目</StatusText>
      <StatusText $w={80}>578 MB</StatusText>
      <ViewModes>
        <DetailsMode>
          <svg width="22" height="18" viewBox="0 0 22 18">
            <path d="M0.500 0.500h6v17h-6zM0.500 6h6M0.500 12h6" fill="#fff" stroke="#8a8a8a" />
            <path d="M3 3.300h1M3 9h1M3 14.700h1" stroke="#333" strokeWidth="1.400" />
            <path d="M8.500 3.500h5M16 3.500h6M8.500 9h5M16 9h6M8.500 14.500h5M16 14.500h6" stroke="#555" strokeWidth="1.200" />
          </svg>
        </DetailsMode>
        <svg width="20" height="16" viewBox="0 0 20 16">
          <rect x="0.700" y="0.700" width="18.600" height="14.600" fill="#fff" stroke="#909090" strokeWidth="1.400" />
          <rect x="3" y="3" width="14" height="10" fill="#8ec6f3" />
          <path d="M3 7c5-1 7 2 14 3v3H3z" fill="#2f6f68" />
        </svg>
      </ViewModes>
    </StatusBar>
  </Explorer>
);

const ContextMenu = () => (
  <Menu>
    {menu.map((m, i) =>
      m === null ? (
        <MenuRule key={i} />
      ) : (
        <MenuItem key={i} $bold={m.bold} $track={m.track}>
          <MenuIcon>{m.icon}</MenuIcon>
          {m.label}
          {m.more && (
            <MenuArrow>
              <svg width="11" height="19" viewBox="0 0 11 19">
                <path d="M1 1l9 8.500L1 18" fill="none" stroke="#222" strokeWidth="1.400" />
              </svg>
            </MenuArrow>
          )}
        </MenuItem>
      )
    )}
  </Menu>
);

const DoubleChevron = () => (
  <svg width="17" height="18" viewBox="0 0 17 18">
    <path d="M1 1.500 8 9l-7 7.500M8.500 1.500l7 7.500-7 7.500" fill="none" stroke="#fff" strokeWidth="2.200" />
  </svg>
);

const Remote = () => (
  <RemotePanel>
    <PanelMain>
      <PanelTitle>
        <svg width="18" height="18" viewBox="0 0 18 18">
          <circle cx="9" cy="6" r="4.500" fill="none" stroke="#8a8a8a" strokeWidth="1.500" />
          <path d="M2 17c.5-3.500 2.500-6 5-6.500h4c2.500.5 4.500 3 5 6.500" fill="none" stroke="#8a8a8a" strokeWidth="1.500" />
        </svg>
        or...g1正在远程本机
      </PanelTitle>
      <PanelTools>
        <PanelTool $w={67}>
          <svg width="34" height="30" viewBox="0 0 34 30" fill="none" stroke="#d2d2d2" strokeWidth="1.800">
            <path d="M1.500 3.500h31v21H13l-5 4.500v-4.500H1.500z" />
            <path d="M8 13.500h3M15.500 13.500h3M23 13.500h3" strokeWidth="3" />
          </svg>
        </PanelTool>
        <PanelTool $w={62}>
          <svg width="26" height="30" viewBox="0 0 26 30" fill="none" stroke="#d2d2d2" strokeWidth="1.800">
            <rect x="7.500" y="1" width="11" height="19" rx="5.500" />
            <path d="M1.500 13.500c0 6.500 4 10.500 11.500 10.500s11.500-4 11.500-10.500M13 24v4M8 28.500h10" />
          </svg>
        </PanelTool>
        <PanelTool $w={65}>
          <svg width="32" height="32" viewBox="0 0 32 32" fill="none" stroke="#d2d2d2" strokeWidth="1.700">
            <path d="M17 26H4a3 3 0 0 1-3-3V8.500a3 3 0 0 1 3-3h21a3 3 0 0 1 3 3V11M15 5.500c0-3 3-1.500 3-4.500" />
            <path d="M6 11h3M11 11h3M16 11h3M6 15.500h3M11 15.500h3M10 20.500h7" strokeWidth="2" />
            <rect x="19" y="11.500" width="12" height="19" rx="6" />
            <path d="M19 19.500h12M25 12v7" />
          </svg>
        </PanelTool>
        <PanelTool $w={63}>
          <svg width="30" height="30" viewBox="0 0 30 30" fill="none" stroke="#d2d2d2" strokeWidth="1.800">
            <rect x="1" y="1.500" width="27.500" height="27" />
            <path d="M9.500 10.500h11M15 10.500V21" strokeWidth="2.400" />
          </svg>
        </PanelTool>
        <PanelTool $w={57}>
          <svg width="32" height="30" viewBox="0 0 32 30" fill="none" stroke="#d2d2d2" strokeWidth="1.800">
            <path d="M1 28.500v-27h9l4 5h16.500v22z" />
            <path d="M9 17.500h13M17 12l5.500 5.500L17 23" />
          </svg>
        </PanelTool>
        <PanelTool $w={30}>
          <svg width="30" height="30" viewBox="0 0 30 30" fill="none" stroke="#d2d2d2" strokeWidth="1.800">
            <circle cx="15" cy="15" r="13.800" />
            <path d="M10.500 10.500l9 9M19.500 10.500l-9 9" />
          </svg>
        </PanelTool>
      </PanelTools>
    </PanelMain>
    <PanelSide>
      <DoubleChevron />
    </PanelSide>
    <PanelNote>正通过长期验证码被控，安全级别低建议改为今日验证码</PanelNote>
    <PanelSide $line>
      <DoubleChevron />
    </PanelSide>
  </RemotePanel>
);

const TaskbarRow = () => (
  <Taskbar>
    <TaskCell $w={64}>
      <svg width="22" height="22" viewBox="0 0 22 22">
        <path d="M0 3l9-1.300v8.800H0zM10.200 1.500 22 0v10.500H10.200zM0 11.600h9v8.700L0 19zM10.200 11.600H22V22l-11.800-1.600z" fill="#fff" />
      </svg>
    </TaskCell>
    <TaskCell $w={64}>
      <svg width="31" height="30" viewBox="0 0 31 30">
        <circle cx="18.500" cy="11.500" r="10.500" fill="none" stroke="#fff" strokeWidth="2.400" />
        <path d="M11 19.500 1.500 29" stroke="#fff" strokeWidth="2.800" />
      </svg>
    </TaskCell>
    <TaskCell $w={70}>
      <Edge s={32} />
    </TaskCell>
    <TaskCell $w={64} $active>
      <svg width="30" height="26" viewBox="0 0 30 26">
        <path d="M1 0h11l2 3.500H1z" fill="#d99a1c" />
        <path d="M1 4h12l2-2h14v22H1z" fill="#fbd668" />
        <path d="M6 25v-11.500h18V25h-4.500v-6h-9v6z" fill="#3b8fd9" />
        <path d="M10.500 19h9v5h-9z" fill="#fce292" />
      </svg>
    </TaskCell>
    <TaskCell $w={65.5}>
      <svg width="30" height="32" viewBox="0 0 30 32">
        <path d="M10 8V5.500a5 5 0 0 1 10 0V8" fill="none" stroke="#fff" strokeWidth="2" />
        <path d="M0 7.500h30V29q0 2.500-2.500 2.500h-25Q0 31.500 0 29z" fill="#fff" />
        <path d="M7.500 12.500h6.800v6.800H7.500z" fill="#f04e23" />
        <path d="M15.800 12.500h6.800v6.800h-6.800z" fill="#7db700" />
        <path d="M7.500 20.700h6.800v6.800H7.500z" fill="#02a3ee" />
        <path d="M15.800 20.700h6.800v6.800h-6.800z" fill="#fdb801" />
      </svg>
    </TaskCell>
    <TaskCell $w={65.3}>
      <svg width="32" height="26" viewBox="0 0 32 26">
        <path d="M0 8.500 16 0l16 8.500V26H0z" fill="#fff" />
        <path d="M2.500 8.500h27L20 15l5 6.500L14 16.500z" fill="#21393f" />
      </svg>
    </TaskCell>
    <TaskCell $w={65.3} $running>
      <WeChat s={33} />
    </TaskCell>
    <TaskCell $w={65.3} $running>
      <ControlPanel s={31} />
    </TaskCell>
    <TaskCell $w={65.3} $running>
      <Baidu s={32} />
    </TaskCell>
    <Tray>
      <TraySlot $mr={12}>
        <svg width="17" height="10" viewBox="0 0 17 10">
          <path d="M1 9l7.500-7.500L16 9" fill="none" stroke="#fff" strokeWidth="2" />
        </svg>
      </TraySlot>
      <TraySlot $mr={10}>
        <svg width="22" height="19" viewBox="0 0 22 19" fill="none" stroke="#fff" strokeWidth="1.500">
          <path d="M7 1.500h14V13.500H4.500V7M12.500 13.500v4M7 17.700h10" />
          <path d="M0.800 0.800h5.500V6H0.800zM2.500 3.500h2" />
        </svg>
      </TraySlot>
      <TraySlot $mr={9}>
        <svg width="22" height="18" viewBox="0 0 22 18" fill="none" stroke="#fff" strokeWidth="1.500">
          <path d="M0.800 6h3.500l4.500-4.500v15L4.300 12H.800zM11.500 6.500c1.300 1.500 1.300 3.500 0 5M14.500 4c2.500 3 2.500 7 0 10M17.500 1.500c4 4.500 4 10.500 0 15" />
        </svg>
      </TraySlot>
      <Ime>中</Ime>
      <Clock>
        <div>15:28</div>
        <div>2024/8/1</div>
      </Clock>
      <Notices>
        <svg width="22" height="23" viewBox="0 0 22 23">
          <path d="M0 0h22v18h-8l-5 5v-5H0z" fill="#fff" />
          <path d="M3.500 5h15M3.500 9h15M3.500 13h10" stroke="#1b2b3c" strokeWidth="1.600" />
        </svg>
        <NoticeCount>1</NoticeCount>
      </Notices>
      <ShowDesktop />
    </Tray>
  </Taskbar>
);

export default function App() {
  return (
    <Screen>
      <Global />
      <Desktop>
        <WallpaperArt />
        <IconGrid>
          {desktopIcons.map((d) => (
            <IconCell key={d.label}>
              <IconArt>
                {d.art}
                {d.link && <Shortcut />}
              </IconArt>
              <IconLabel $latin={d.latin}>{d.label}</IconLabel>
            </IconCell>
          ))}
        </IconGrid>
        <UploadPill>
          <UploadIcon>
            <svg width="28" height="22" viewBox="0 0 28 22" fill="none" stroke="#fff" strokeWidth="3">
              <circle cx="14" cy="7" r="5.300" />
              <circle cx="6.800" cy="15" r="5" />
              <path d="M17.500 18.800a5 5 0 1 0 0-7.500M10 11.500l7.500 7.300" />
            </svg>
          </UploadIcon>
          拖拽至此上传
        </UploadPill>
        <ExplorerWindow />
        <ContextMenu />
        <Highlight />
        <FolderTab>
          <svg width="17" height="16" viewBox="0 0 17 16">
            <path d="M0.500 1h5l1.500 2h8v3H2.500L.500 13z" fill="#c52b4d" />
            <path d="M3 6h14l-2 9H1z" fill="#e83e63" />
          </svg>
        </FolderTab>
        <Remote />
      </Desktop>
      <TaskbarRow />
      <SessionTab>
        <svg width="20" height="20" viewBox="0 0 20 20">
          <path d="M1 0.500 13 7.500 1 13.500zM19 19.500 7 13 19 6.500z" fill="#b7c2cb" />
        </svg>
        <svg width="20" height="20" viewBox="0 0 20 20">
          <circle cx="10" cy="10" r="9.800" fill="#d6dee5" />
          <path d="M5 5l10 10M15 5 5 15" stroke="#22303b" strokeWidth="2.400" />
        </svg>
      </SessionTab>
    </Screen>
  );
}
